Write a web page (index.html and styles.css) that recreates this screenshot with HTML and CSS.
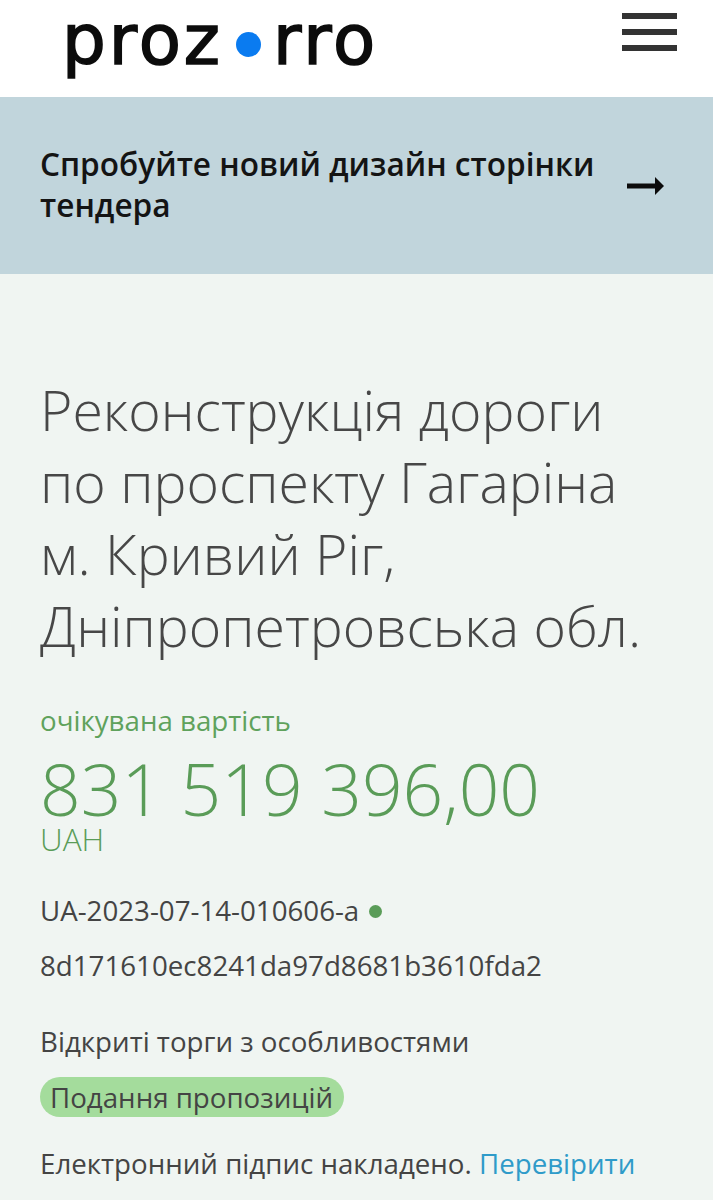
FILE: index.html
```html
<!DOCTYPE html>
<html lang="uk">
<head>
    <meta charset="UTF-8">
    <meta name="viewport" content="width=device-width, initial-scale=1.0">
    <title>Реконструкція дороги</title>
    <link rel="stylesheet" href="styles.css">
</head>
<body>
    <header class="site-header">
        <a class="logo" href="#"><span>proz</span><i class="logo-dot"></i><span>rro</span></a>
        <button class="menu-button" aria-label="Меню">
            <span></span>
            <span></span>
            <span></span>
        </button>
    </header>

    <a class="new-design" href="#">
        <span class="new-design-text">Спробуйте новий дизайн сторінки тендера</span>
        <svg class="new-design-arrow" width="38" height="20" viewBox="0 0 38 20">
            <path d="M0 10H30" stroke="#0c0c0c" stroke-width="5" fill="none"/>
            <path d="M28 1L37 10L28 19Z" fill="#0c0c0c"/>
        </svg>
    </a>

    <main class="tender">
        <h1 class="tender-title">Реконструкція дороги<br>по проспекту Гагаріна<br>м. Кривий Ріг,<br>Дніпропетровська обл.</h1>

        <div class="price-label">очікувана вартість</div>
        <div class="price">831 519 396,00</div>
        <div class="currency">UAH</div>

        <div class="tender-id">UA-2023-07-14-010606-a <i class="id-dot"></i></div>
        <div class="tender-hash">8d171610ec8241da97d8681b3610fda2</div>

        <div class="tender-type">Відкриті торги з особливостями</div>
        <div class="status">Подання пропозицій</div>

        <div class="signature">Електронний підпис накладено. <a href="#">Перевірити</a></div>
    </main>
</body>
</html>
```

FILE: styles.css
```css
html, body {
    height: 1200px;
    overflow: hidden;
}

body {
    margin: 0;
    font-family: 'Open Sans', sans-serif;
    background-color: #f0f5f2;
    color: #444;
}

a {
    text-decoration: none;
}

.site-header {
    height: 97px;
    background-color: #fff;
    display: flex;
    justify-content: space-between;
    align-items: flex-start;
    padding: 0 36px 0 62px;
}

.logo {
    display: flex;
    align-items: flex-start;
    font-family: 'DejaVu Sans', sans-serif;
    font-size: 69px;
    line-height: 80px;
    font-weight: 400;
    letter-spacing: 3px;
    color: #0c0c0c;
    -webkit-text-stroke: 1.6px #0c0c0c;
}

.logo-dot {
    width: 25px;
    height: 25px;
    margin: 32px 12px 0 13px;
    border-radius: 50%;
    background-color: #0a7bf0;
}

.menu-button {
    display: flex;
    flex-direction: column;
    gap: 10px;
    width: 55px;
    margin-top: 13px;
    padding: 0;
    border: none;
    background: none;
}

.menu-button span {
    height: 6px;
    background-color: #333;
}

.new-design {
    height: 177px;
    box-sizing: border-box;
    background-color: #c1d5dc;
    display: flex;
    align-items: center;
    justify-content: space-between;
    padding: 0 48px 0 40px;
}

.new-design-text {
    width: 570px;
    margin-top: -4px;
    font-size: 31.6px;
    line-height: 41px;
    font-weight: 600;
    color: #141414;
}

.tender {
    padding: 100px 40px 0;
}

.tender-title {
    margin: 0 0 40px;
    font-size: 55.4px;
    line-height: 72px;
    font-weight: 300;
    color: #474747;
}

.price-label {
    font-size: 27.7px;
    line-height: 36px;
    color: #5fa25c;
}

.price {
    margin-top: 15px;
    font-size: 71.3px;
    line-height: 72px;
    font-weight: 300;
    color: #5a9c58;
}

.currency {
    margin-top: -1px;
    font-size: 31.5px;
    line-height: 30px;
    font-weight: 300;
    color: #5a9c58;
}

.tender-id {
    margin-top: 38px;
    font-size: 27.7px;
    line-height: 36px;
}

.id-dot {
    display: inline-block;
    width: 13px;
    height: 13px;
    margin-left: 3px;
    border-radius: 50%;
    background-color: #5a9c58;
    vertical-align: 3px;
}

.tender-hash {
    margin-top: 19px;
    font-size: 27.7px;
    line-height: 36px;
}

.tender-type {
    margin-top: 40px;
    font-size: 27.7px;
    line-height: 36px;
}

.status {
    display: inline-block;
    margin-top: 18px;
    padding: 0 11px 0 10px;
    border-radius: 20px;
    background-color: #a4dc9c;
    font-size: 27.7px;
    line-height: 40px;
}

.signature {
    margin-top: 28px;
    font-size: 27.7px;
    line-height: 36px;
}

.signature a {
    color: #2f9bc9;
}
```
